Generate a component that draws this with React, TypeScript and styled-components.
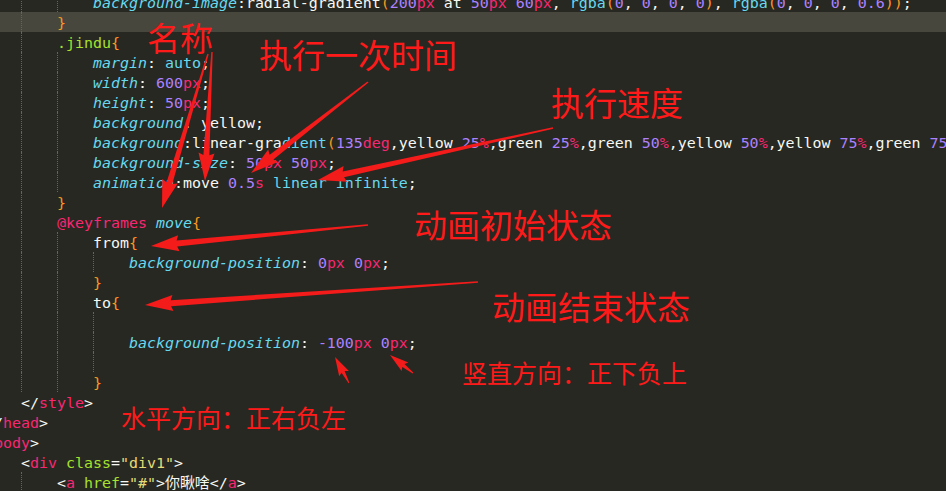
import styled, { createGlobalStyle } from "styled-components";

type Kind = "p" | "w" | "n" | "u" | "b" | "s" | "k" | "f" | "t" | "a" | "q" | "i";
type Token = [Kind, string];
type CodeLine = { indent: number; tokens: Token[] };

const colors: Record<Kind, string> = {
  p: "#66d9ef",
  w: "#f8f8f2",
  n: "#ae81ff",
  u: "#f92672",
  b: "#fd971f",
  s: "#a6e22e",
  k: "#f92672",
  f: "#66d9ef",
  t: "#f92672",
  a: "#a6e22e",
  q: "#e6db74",
  i: "#66d9ef",
};

const px = (n: string): Token[] => [
  ["n", n],
  ["u", "px"],
];

const lines: CodeLine[] = [
  {
    indent: 3,
    tokens: [
      ["p", "background-image"],
      ["w", ":radial-gradient"],
      ["b", "("],
      ...px("200"),
      ["w", " at "],
      ...px("50"),
      ["w", " "],
      ...px("60"),
      ["w", ", "],
      ["f", "rgba"],
      ["b", "("],
      ["n", "0"],
      ["w", ", "],
      ["n", "0"],
      ["w", ", "],
      ["n", "0"],
      ["w", ", "],
      ["n", "0"],
      ["b", ")"],
      ["w", ", "],
      ["f", "rgba"],
      ["b", "("],
      ["n", "0"],
      ["w", ", "],
      ["n", "0"],
      ["w", ", "],
      ["n", "0"],
      ["w", ", "],
      ["n", "0.6"],
      ["b", "))"],
      ["w", ";"],
    ],
  },
  { indent: 2, tokens: [["b", "}"]] },
  { indent: 2, tokens: [["s", ".jindu"], ["b", "{"]] },
  { indent: 3, tokens: [["p", "margin"], ["w", ": "], ["f", "auto"], ["w", ";"]] },
  { indent: 3, tokens: [["p", "width"], ["w", ": "], ...px("600"), ["w", ";"]] },
  { indent: 3, tokens: [["p", "height"], ["w", ": "], ...px("50"), ["w", ";"]] },
  { indent: 3, tokens: [["p", "background"], ["w", ": yellow;"]] },
  {
    indent: 3,
    tokens: [
      ["p", "background"],
      ["w", ":linear-gra"],
      ["f", "dient"],
      ["b", "("],
      ["n", "135"],
      ["u", "deg"],
      ["w", ",yellow "],
      ["n", "25"],
      ["u", "%"],
      ["w", ",green "],
      ["n", "25"],
      ["u", "%"],
      ["w", ",green "],
      ["n", "50"],
      ["u", "%"],
      ["w", ",yellow "],
      ["n", "50"],
      ["u", "%"],
      ["w", ",yellow "],
      ["n", "75"],
      ["u", "%"],
      ["w", ",green "],
      ["n", "75"],
      ["u", "%"],
      ["w", ",green"],
      ["b", ")"],
      ["w", ";"],
    ],
  },
  {
    indent: 3,
    tokens: [["p", "background-size"], ["w", ": "], ...px("50"), ["w", " "], ...px("50"), ["w", ";"]],
  },
  {
    indent: 3,
    tokens: [
      ["p", "animation"],
      ["w", ":move "],
      ["n", "0.5"],
      ["u", "s"],
      ["w", " "],
      ["f", "linear infinite"],
      ["w", ";"],
    ],
  },
  { indent: 2, tokens: [["b", "}"]] },
  { indent: 2, tokens: [["k", "@keyframes"], ["w", " "], ["i", "move"], ["b", "{"]] },
  { indent: 3, tokens: [["w", "from"], ["b", "{"]] },
  {
    indent: 4,
    tokens: [["p", "background-position"], ["w", ": "], ...px("0"), ["w", " "], ...px("0"), ["w", ";"]],
  },
  { indent: 3, tokens: [["b", "}"]] },
  { indent: 3, tokens: [["w", "to"], ["b", "{"]] },
  { indent: 4, tokens: [] },
  {
    indent: 4,
    tokens: [["p", "background-position"], ["w", ": "], ...px("-100"), ["w", " "], ...px("0"), ["w", ";"]],
  },
  { indent: 4, tokens: [] },
  { indent: 3, tokens: [["b", "}"]] },
  { indent: 1, tokens: [["w", "</"], ["t", "style"], ["w", ">"]] },
  { indent: 0, tokens: [["w", "</"], ["t", "head"], ["w", ">"]] },
  { indent: 0, tokens: [["w", "<"], ["t", "body"], ["w", ">"]] },
  {
    indent: 1,
    tokens: [["w", "<"], ["t", "div"], ["w", " "], ["a", "class"], ["w", "="], ["q", '"div1"'], ["w", ">"]],
  },
  {
    indent: 2,
    tokens: [
      ["w", "<"],
      ["t", "a"],
      ["w", " "],
      ["a", "href"],
      ["w", "="],
      ["q", '"#"'],
      ["w", ">你瞅啥</"],
      ["t", "a"],
      ["w", ">"],
    ],
  },
];

const ACTIVE_LINE = 1;

type Note = { text: string; x: number; y: number; size: number };

const notes: Note[] = [
  { text: "名称", x: 147, y: 21, size: 33 },
  { text: "执行一次时间", x: 259, y: 38, size: 33 },
  { text: "执行速度", x: 551, y: 86, size: 33 },
  { text: "动画初始状态", x: 414, y: 208, size: 33 },
  { text: "动画结束状态", x: 492, y: 290, size: 33 },
  { text: "竖直方向：正下负上", x: 462, y: 360, size: 25 },
  { text: "水平方向：正右负左", x: 121, y: 405, size: 25 },
];

type Arrow = { from: [number, number]; to: [number, number]; small?: boolean };

const arrows: Arrow[] = [
  { from: [208, 54], to: [162, 208] },
  { from: [212, 52], to: [205, 181] },
  { from: [368, 82], to: [251, 173] },
  { from: [553, 128], to: [318, 180] },
  { from: [368, 225], to: [151, 246] },
  { from: [478, 282], to: [145, 305] },
  { from: [349, 383], to: [335, 357], small: true },
  { from: [413, 373], to: [390, 355], small: true },
];

function arrowPoints({ from, to, small }: Arrow) {
  const [x1, y1] = from;
  const [x2, y2] = to;
  const len = Math.hypot(x2 - x1, y2 - y1);
  const ux = (x2 - x1) / len;
  const uy = (y2 - y1) / len;
  const nx = -uy;
  const ny = ux;
  const head = small ? 17 : 26;
  const wide = small ? 11 : 16;
  const tail = small ? 1 : 1.5;
  const neck = small ? 3.5 : 6;
  const bx = x2 - ux * head;
  const by = y2 - uy * head;
  const pts = [
    [x1 + (nx * tail) / 2, y1 + (ny * tail) / 2],
    [bx + (nx * neck) / 2, by + (ny * neck) / 2],
    [bx + (nx * wide) / 2 - ux * 2, by + (ny * wide) / 2 - uy * 2],
    [x2, y2],
    [bx - (nx * wide) / 2 - ux * 2, by - (ny * wide) / 2 - uy * 2],
    [bx - (nx * neck) / 2, by - (ny * neck) / 2],
    [x1 - (nx * tail) / 2, y1 - (ny * tail) / 2],
  ];
  return pts.map(([x, y]) => `${x.toFixed(1)},${y.toFixed(1)}`).join(" ");
}

export default function App() {
  return (
    <>
      <GlobalStyle />
      <Screen>
        <Editor>
          {lines.map((line, i) => (
            <Line key={i} $active={i === ACTIVE_LINE}>
              {Array.from({ length: line.indent }).map((_, k) => (
                <Indent key={k} $guide={k > 0} />
              ))}
              {line.tokens.map(([kind, text], j) => (
                <Tok key={j} $color={colors[kind]} $italic={kind === "p" || kind === "i"}>
                  {text}
                </Tok>
              ))}
            </Line>
          ))}
        </Editor>
        <Arrows width="946" height="491" viewBox="0 0 946 491">
          {arrows.map((a, i) => (
            <polygon key={i} points={arrowPoints(a)} fill="#f41b1b" />
          ))}
        </Arrows>
        {notes.map((n) => (
          <Label key={n.text} $x={n.x} $y={n.y} $size={n.size}>
            {n.text}
          </Label>
        ))}
      </Screen>
    </>
  );
}

const GlobalStyle = createGlobalStyle`
  html, body {
    margin: 0;
    padding: 0;
    background: #272822;
    overflow: hidden;
  }
`;

const Screen = styled.div`
  position: relative;
  width: 946px;
  height: 491px;
  overflow: hidden;
  background: #272822;
`;

const Editor = styled.div`
  margin: -8px 0 0 -15px;
  font-family: "DejaVu Sans Mono", "Noto Sans CJK SC", monospace;
  font-size: 14.95px;
`;

const Line = styled.div<{ $active: boolean }>`
  display: flex;
  align-items: flex-start;
  height: 20px;
  white-space: pre;
  background: ${({ $active }) => ($active ? "#48473e" : "transparent")};
`;

const Indent = styled.span<{ $guide: boolean }>`
  flex: none;
  width: 36px;
  height: 20px;
  box-sizing: border-box;
  border-left: ${({ $guide }) => ($guide ? "1px dotted #65655b" : "none")};
`;

const Tok = styled.span<{ $color: string; $italic: boolean }>`
  padding-top: 1px;
  line-height: 20px;
  color: ${({ $color }) => $color};
  font-style: ${({ $italic }) => ($italic ? "italic" : "normal")};
`;

const Arrows = styled.svg`
  position: absolute;
  left: 0;
  top: 0;
  pointer-events: none;
`;

const Label = styled.div<{ $x: number; $y: number; $size: number }>`
  position: absolute;
  left: ${({ $x }) => $x}px;
  top: ${({ $y }) => $y}px;
  font-family: "Noto Sans CJK SC", sans-serif;
  font-size: ${({ $size }) => $size}px;
  line-height: 1;
  color: #ff1a1a;
  white-space: nowrap;
`;
